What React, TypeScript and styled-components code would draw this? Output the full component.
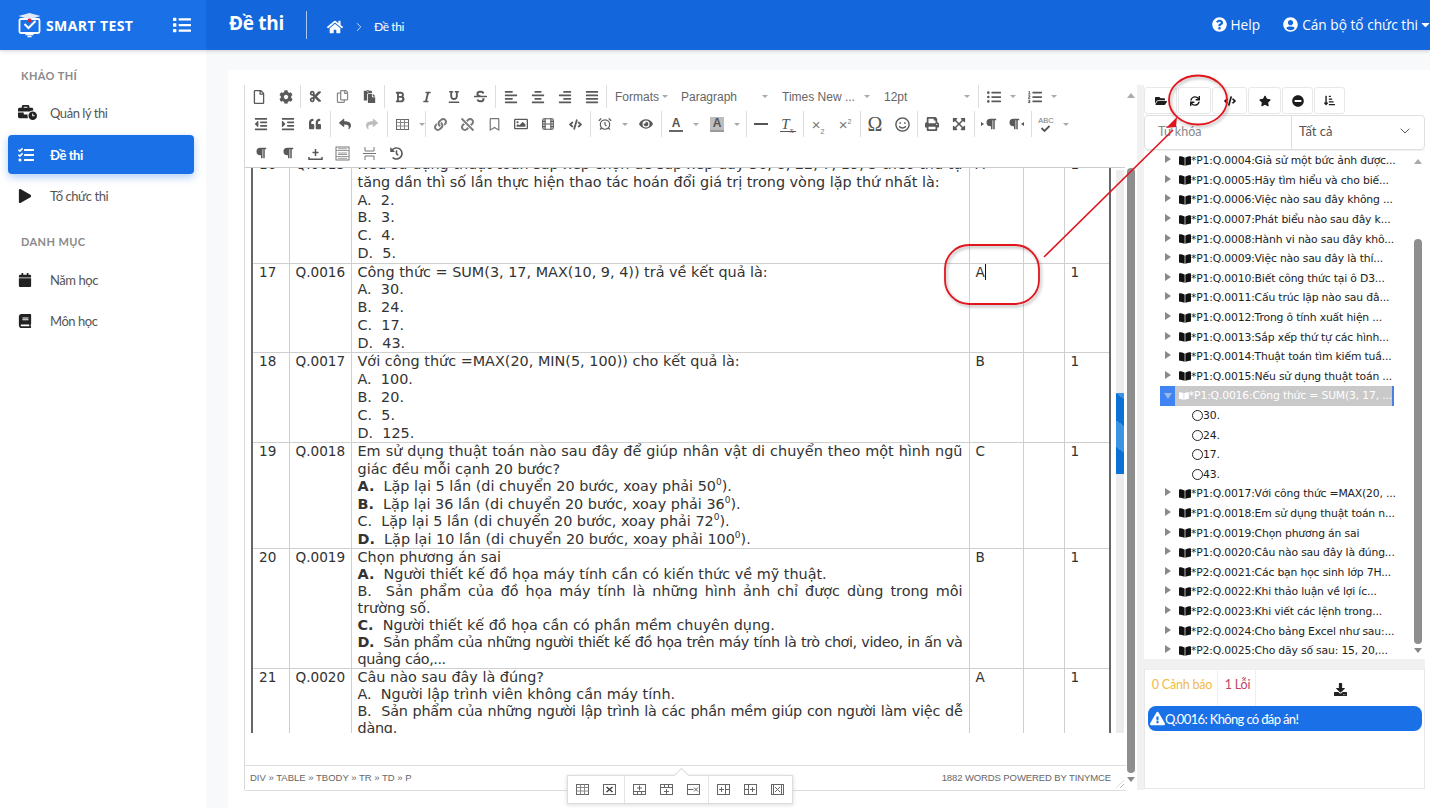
import type { FC, ReactNode } from 'react'
import {
  FaAlignCenter, FaAlignJustify, FaAlignLeft, FaAlignRight, FaBold, FaBook, FaBookOpen, FaBusinessTime,
  FaCalendar, FaCaretDown, FaCode, FaCog, FaCut, FaDownload, FaExclamationTriangle, FaExpandArrowsAlt, FaEye,
  FaFolderOpen, FaHistory, FaHome, FaIndent, FaItalic, FaLink, FaList, FaListOl, FaListUl, FaMinusCircle, FaOutdent,
  FaParagraph, FaPaste, FaPlay, FaPrint, FaQuestionCircle, FaQuoteLeft, FaRegBookmark, FaRegCopy, FaRegFile,
  FaRegImage, FaRegSmile, FaReply, FaShare, FaSortAmountDownAlt, FaStar, FaStrikethrough, FaSync, FaTasks,
  FaUnderline, FaUnlink, FaUserCircle
} from 'react-icons/fa'
import { AlarmClock, ChevronDown, ChevronRight, Film } from 'lucide-react'
import styled, { createGlobalStyle } from 'styled-components'

const GlobalStyle = createGlobalStyle`
  html, body { margin: 0; padding: 0; background: #f8f9fb; }
  * { box-sizing: border-box; }
`

const Page = styled.div`
  position: relative;
  width: 1430px;
  height: 808px;
  overflow: hidden;
  font-family: Lato, 'Liberation Sans', sans-serif;
  display: flex;
  flex-direction: column;
`

/* header */
const Header = styled.header`
  height: 50px;
  flex: none;
  display: flex;
  align-items: center;
  background: #1366db;
  color: #fff;
  box-shadow: 0 1px 4px rgba(0, 0, 0, 0.18);
  z-index: 2;
`
const Brand = styled.div`
  width: 206px;
  height: 100%;
  flex: none;
  display: flex;
  align-items: center;
  padding: 0 15px 0 17px;
  background: #1a70e6;
`
const BrandName = styled.span`
  margin-left: 4px;
  font-family: 'Open Sans', sans-serif;
  font-size: 14px;
  font-weight: 700;
  letter-spacing: 0.4px;
  flex: 1;
`
const PageTitle = styled.h1`
  margin: -5px 0 0 23px;
  font-size: 19px;
  font-weight: 700;
  font-family: 'Open Sans', sans-serif;
  letter-spacing: -0.3px;
`
const HeadSep = styled.div`
  width: 1px;
  height: 28px;
  background: #a9c8f3;
  margin: 0 20px 0 22px;
`
const Crumb = styled.div`
  display: flex;
  align-items: center;
  gap: 7px;
  font-size: 12px;
  margin-top: 3px;
  letter-spacing: -0.4px;
`
const HeadRight = styled.div`
  margin-left: auto;
  display: flex;
  align-items: center;
  font-family: 'Open Sans', sans-serif;
  font-size: 13.7px;
  margin-top: -2px;
  white-space: nowrap;
`
const HeadLink = styled.span<{ $gap: number }>`
  display: flex;
  align-items: center;
  gap: 4px;
  margin-right: ${(p) => p.$gap}px;
`

/* sidebar */
const Body = styled.div`
  flex: 1;
  display: flex;
  min-height: 0;
`
const Sidebar = styled.aside`
  width: 206px;
  flex: none;
  background: #fff;
  padding: 19px 12px 0 8px;
`
const NavTitle = styled.div<{ $top?: number; $bottom: number }>`
  font-size: 11px;
  font-weight: 700;
  color: #8a8a8a;
  letter-spacing: 0.4px;
  padding-left: 13px;
  height: 13px;
  line-height: 13px;
  margin: ${(p) => p.$top ?? 0}px 0 ${(p) => p.$bottom}px;
`
const NavItem = styled.div<{ $active?: boolean }>`
  height: ${(p) => (p.$active ? 39 : 41)}px;
  margin: ${(p) => (p.$active ? '2px 0 1px' : '0')};
  display: flex;
  align-items: center;
  padding-left: 10px;
  font-size: 13px;
  letter-spacing: -0.45px;
  border-radius: 4px;
  color: ${(p) => (p.$active ? '#fff' : '#555')};
  font-weight: ${(p) => (p.$active ? 700 : 400)};
  background: ${(p) => (p.$active ? '#1a70e6' : 'transparent')};
  box-shadow: ${(p) => (p.$active ? '0 3px 8px rgba(26, 112, 230, 0.35)' : 'none')};
`
const NavIcon = styled.span`
  width: 32px;
  display: flex;
  justify-content: flex-start;
  color: #222;
  ${NavItem}[data-active='true'] & { color: #fff; }
`

/* main card */
const Main = styled.main`
  flex: 1;
  padding: 20px 0 0 22px;
  background: #f8f9fb;
  min-width: 0;
`
const Card = styled.section`
  height: 100%;
  background: #fff;
  display: flex;
  padding: 15px 5px 18px 16px;
`
const EditorPane = styled.div`
  width: 881px;
  flex: none;
  display: flex;
  flex-direction: column;
  border-left: 1px solid #d8d8d8;
`
const ToolStack = styled.div`
  height: 83px;
  flex: none;
  border-bottom: 1px solid #ccc;
  color: #555;
`
const ToolRow = styled.div<{ $inset: number; $h: number; $after: number }>`
  display: flex;
  align-items: stretch;
  height: ${(p) => p.$h}px;
  margin-bottom: ${(p) => p.$after}px;
  padding-left: ${(p) => p.$inset}px;
`
const ToolGroup = styled.div`
  display: flex;
  align-items: center;
  & + & {
    border-left: 1px solid #dedede;
    margin-left: 1px;
    padding-left: 1px;
  }
`
const ToolBtn = styled.div<{ $w?: number; $muted?: boolean }>`
  width: ${(p) => p.$w ?? 27}px;
  height: 22px;
  flex: none;
  display: flex;
  align-items: center;
  color: ${(p) => (p.$muted ? '#bcbcbc' : '#595959')};
`
const IconBox = styled.span`
  width: 27px;
  flex: none;
  display: flex;
  justify-content: center;
  align-items: center;
`
const MiniCaret = styled.span`
  width: 0;
  height: 0;
  margin-left: 3px;
  border-left: 3px solid transparent;
  border-right: 3px solid transparent;
  border-top: 3px solid #aaa;
`
const ListBox = styled.div<{ $w: number }>`
  width: ${(p) => p.$w}px;
  display: flex;
  align-items: center;
  justify-content: space-between;
  padding: 0 7px;
  font-family: 'Liberation Sans', sans-serif;
  font-size: 12px;
  color: #666;
  white-space: nowrap;
`
const LetterA = styled.span<{ $bg?: boolean }>`
  font-family: 'Liberation Sans', sans-serif;
  font-size: 12px;
  font-weight: 700;
  line-height: 13px;
  padding: 0 3px;
  color: #555;
  background: ${(p) => (p.$bg ? '#bdbdbd' : 'transparent')};
  border-bottom: 2px solid ${(p) => (p.$bg ? '#9a9a9a' : '#666')};
`
const HrLine = styled.span`
  width: 14px;
  height: 2px;
  background: #555;
`
const Omega = styled.span`
  font-family: 'Liberation Serif', serif;
  font-size: 20px;
  line-height: 20px;
  color: #555;
`
const ClearFormat = styled.span`
  font-family: 'Liberation Serif', serif;
  font-style: italic;
  font-size: 15px;
  line-height: 14px;
  color: #555;
  border-bottom: 1.5px solid #555;
  padding: 0 2px 0 1px;
  sub {
    font-size: 8px;
    line-height: 0;
    font-style: normal;
  }
`
const ScriptX = styled.span`
  font-family: 'Liberation Sans', sans-serif;
  font-size: 15px;
  line-height: 15px;
  color: #777;
  sub, sup {
    font-size: 7px;
    line-height: 0;
  }
`
const DirMark = styled.span<{ $rtl?: boolean }>`
  display: flex;
  align-items: center;
  flex-direction: ${(p) => (p.$rtl ? 'row-reverse' : 'row')};
  gap: 1px;
  &::before {
    content: '';
    border-top: 2.5px solid transparent;
    border-bottom: 2.5px solid transparent;
    ${(p) => (p.$rtl ? 'border-right: 3px solid #555;' : 'border-left: 3px solid #555;')}
  }
`
const SpellMark = styled.span`
  display: flex;
  flex-direction: column;
  align-items: center;
  font-family: 'Liberation Sans', sans-serif;
  font-size: 7.5px;
  line-height: 8px;
  color: #777;
`
const ContentArea = styled.div`
  height: 597px;
  flex: none;
  display: flex;
  align-items: flex-start;
  padding-left: 6px;
`
const TableView = styled.div`
  width: 860px;
  height: 565px;
  flex: none;
  overflow: hidden;
`
const InnerTrack = styled.div`
  width: 8px;
  height: 563px;
  flex: none;
  margin: 2px 0 0 5px;
  background: #ececec;
  padding-top: 223px;
`
const InnerThumb = styled.div`
  height: 81px;
  background: repeating-linear-gradient(35deg, #0b72d4 0 22px, #3d94e2 22px 44px);
`
const Grid = styled.table`
  table-layout: fixed;
  width: 858px;
  margin-top: -13px;
  border-collapse: collapse;
  font-family: 'DejaVu Sans', Verdana, sans-serif;
  font-size: 14.4px;
  color: #333;
  border-left: 2px solid #666;
  border-right: 2px solid #666;
`
const Row = styled.tr<{ $lh: number }>`
  line-height: ${(p) => p.$lh}px;
`
const Cell = styled.td`
  border: 1px solid #cfcfcf;
  padding: 0 6px;
  vertical-align: top;
`
const Line = styled.div<{ $fill?: boolean; $tight?: number }>`
  text-align: ${(p) => (p.$fill ? 'justify' : 'left')};
  letter-spacing: ${(p) => p.$tight ?? 0}px;
  white-space: pre-wrap;
`
const Small = styled.span`
  font-size: 13.6px;
`
const Sup = styled.sup`
  font-size: 9px;
  line-height: 0;
`
const CaretMark = styled.span`
  border-right: 1px solid #111;
`
const StatusBar = styled.div`
  position: relative;
  height: 26px;
  flex: none;
  display: flex;
  justify-content: space-between;
  align-items: center;
  padding: 0 15px 2px 5px;
  border-top: 1px solid #ddd;
  border-bottom: 1px solid #ddd;
  margin-right: -1px;
  font-family: 'Liberation Sans', sans-serif;
  font-size: 9.5px;
  color: #666;
  &::after {
    content: '';
    position: absolute;
    right: 2px;
    bottom: 2px;
    width: 8px;
    height: 8px;
    background: repeating-linear-gradient(135deg, transparent 0 2px, #bbb 2px 3px);
    clip-path: polygon(100% 0, 100% 100%, 0 100%);
  }
`
const WordCount = styled.span`
  letter-spacing: -0.1px;
`
const EditorScroll = styled.div`
  width: 12px;
  flex: none;
  display: flex;
  flex-direction: column;
  align-items: center;
  padding-bottom: 3px;
`
const ScrollArrow = styled.span<{ $up?: boolean; $h: number }>`
  width: 0;
  height: 0;
  flex: none;
  border-left: 4px solid transparent;
  border-right: 4px solid transparent;
  border-bottom: ${(p) => (p.$up ? '5px solid #aaa' : '0')};
  border-top: ${(p) => (p.$up ? '0' : '5px solid #888')};
  margin: ${(p) => (p.$up ? `8px 0 ${p.$h}px` : `${p.$h}px 0 0`)};
`
const ScrollThumb = styled.div<{ $h: number; $w?: number }>`
  width: ${(p) => p.$w ?? 8}px;
  height: ${(p) => p.$h}px;
  flex: none;
  border-radius: 4px;
  background: #8e8e8e;
`
const Gutter = styled.div`
  width: 7px;
  flex: none;
  background: #f1f1f1;
`

/* right pane */
const RightPane = styled.div`
  width: 281px;
  flex: none;
  display: flex;
  flex-direction: column;
`
const ActionRow = styled.div`
  display: flex;
  gap: 1px;
  margin-top: 2px;
  height: 27px;
  flex: none;
`
const ActionBtn = styled.div<{ $w: number }>`
  width: ${(p) => p.$w}px;
  border: 1px solid #e8e8e8;
  border-radius: 3px;
  display: flex;
  align-items: center;
  justify-content: center;
  color: #1c1c1c;
`
const FilterRow = styled.div`
  height: 35px;
  flex: none;
  margin-top: 1px;
  display: flex;
  border: 1px solid #dfdfdf;
  border-radius: 4px;
  font-size: 12.5px;
`
const KeywordInput = styled.div`
  width: 147px;
  padding: 0 13px 3px;
  display: flex;
  align-items: center;
  color: #888;
  border-right: 1px solid #dfdfdf;
`
const ScopeSelect = styled.div`
  flex: 1;
  padding: 0 11px 3px 7px;
  display: flex;
  align-items: center;
  justify-content: space-between;
  color: #555;
  font-size: 13px;
`
const TreePane = styled.div`
  height: 509px;
  flex: none;
  display: flex;
  border-top: 1px solid #f1f1f1;
`
const TreeList = styled.div`
  width: 269px;
  flex: none;
  font-family: 'DejaVu Sans', Verdana, sans-serif;
  font-size: 10.8px;
  letter-spacing: -0.17px;
  color: #222;
  padding-left: 16px;
`
const TreeRow = styled.div<{ $selected?: boolean }>`
  height: 19.6px;
  display: flex;
  align-items: center;
  white-space: nowrap;
  width: ${(p) => (p.$selected ? '234px' : 'auto')};
  color: ${(p) => (p.$selected ? '#fff' : '#222')};
  background: ${(p) => (p.$selected ? '#c9c9c9' : 'transparent')};
  border-right: ${(p) => (p.$selected ? '2px solid #4a80e0' : '0')};
`
const Toggle = styled.span<{ $selected?: boolean }>`
  width: 15px;
  height: 100%;
  flex: none;
  display: flex;
  align-items: center;
  justify-content: center;
  background: ${(p) => (p.$selected ? '#3f84f2' : 'transparent')};
  margin-right: 4px;
  &::before {
    content: '';
    ${(p) =>
      p.$selected
        ? 'border-left: 4px solid transparent; border-right: 4px solid transparent; border-top: 6px solid #9db9e6;'
        : 'border-top: 4px solid transparent; border-bottom: 4px solid transparent; border-left: 6px solid #8a8a8a; margin-top: -3px;'}
  }
`
const Answer = styled.div`
  height: 19.6px;
  display: flex;
  align-items: center;
  padding-left: 32px;
`
const Radio = styled.span`
  width: 11px;
  height: 11px;
  border-radius: 50%;
  border: 1.3px solid #222;
`
const TreeScroll = styled.div`
  width: 12px;
  flex: none;
  margin-left: -1px;
  display: flex;
  flex-direction: column;
  align-items: center;
`
const Splitter = styled.div`
  height: 10px;
  flex: none;
  background: #f1f1f1;
  margin-left: -1px;
`
const IssuePanel = styled.div`
  height: 120px;
  flex: none;
  border: 1px solid #e8e8e8;
  border-top-color: #eee;
`
const IssueTabs = styled.div`
  height: 36px;
  display: flex;
  font-size: 12.5px;
  letter-spacing: -0.2px;
`
const IssueTab = styled.div<{ $color: string; $w: number }>`
  width: ${(p) => p.$w}px;
  display: flex;
  align-items: center;
  justify-content: center;
  padding: 0 0 7px 2px;
  color: ${(p) => p.$color};
  border-right: 1px solid #eee;
`
const IssueTools = styled.div`
  flex: 1;
  display: flex;
  justify-content: center;
  align-items: center;
  padding-top: 2px;
  color: #222;
`
const Alert = styled.div`
  margin: 0 2px 0 3px;
  height: 25px;
  display: flex;
  align-items: center;
  padding-left: 2px;
  gap: 0;
  border-radius: 8px;
  background: #1a70e6;
  color: #fff;
  font-size: 13px;
  letter-spacing: -0.65px;
`

/* overlays */
const Marks = styled.svg`
  position: absolute;
  inset: 0;
  pointer-events: none;
  z-index: 4;
`
const FloatBar = styled.div`
  position: absolute;
  left: 567px;
  top: 775px;
  height: 29px;
  display: flex;
  background: #fff;
  border: 1px solid #ddd;
  box-shadow: 0 1px 4px rgba(0, 0, 0, 0.15);
  z-index: 3;
  &::before {
    content: '';
    position: absolute;
    left: 108px;
    top: -6px;
    width: 10px;
    height: 10px;
    background: #fff;
    border-left: 1px solid #ddd;
    border-top: 1px solid #ddd;
    transform: rotate(45deg);
  }
`
const FloatGroup = styled.div`
  display: flex;
  align-items: center;
  padding: 0 1px;
  position: relative;
  & + & { border-left: 1px solid #e3e3e3; }
`
const FloatBtn = styled.span`
  width: 27px;
  display: flex;
  justify-content: center;
`

const Logo: FC = () => (
  <svg width="25" height="26" viewBox="0 0 24 26" fill="none">
    <rect x="2" y="7" width="20" height="14" rx="1.5" stroke="#fff" strokeWidth="1.8" />
    <path d="M8 22.5h8M10 24.5h4" stroke="#fff" strokeWidth="1.6" />
    <path d="M1 4l11-3 11 3-11 3.5z" fill="#dfe9fb" />
    <path d="M7 12l4 4 7-7" stroke="#fff" strokeWidth="2" />
    <circle cx="12" cy="8.5" r="2" fill="#d7263d" />
  </svg>
)

type TableMark = 'none' | 'x' | 'rowUp' | 'rowDown' | 'rowX' | 'colLeft' | 'colRight' | 'colX'

// small table glyph used by the table menu and floating toolbar
const TableGlyph: FC<{ mark?: TableMark; size?: number }> = ({ mark = 'none', size = 15 }) => (
  <svg width={size} height={size} viewBox="0 0 15 15" fill="none" stroke="#666" strokeWidth="1">
    <rect x="1.5" y="2.5" width="12" height="10" />
    {mark === 'none' && <path d="M1.5 5.5h12M1.5 9h12M5.5 2.5v10M9.5 2.5v10" stroke="#888" />}
    {mark === 'x' && <path d="M4.5 5l6 5M10.5 5l-6 5" strokeWidth="1.6" stroke="#444" />}
    {mark === 'rowUp' && <path d="M1.5 9.5h12M5.5 9.5v3M9.5 9.5v3M7.5 3.5v5M5 6h5" />}
    {mark === 'rowDown' && <path d="M1.5 5.5h12M5.5 2.5v3M9.5 2.5v3M7.5 7v5M5 9.5h5" />}
    {mark === 'rowX' && <path d="M1.5 7.5h6M8 5.5l4 4M12 5.5l-4 4" />}
    {mark === 'colLeft' && <path d="M9.5 2.5v10M3 7.5h5M5.5 5v5M9.5 7.5h4" />}
    {mark === 'colRight' && <path d="M5.5 2.5v10M7 7.5h5M9.5 5v5M1.5 7.5h4" />}
    {mark === 'colX' && <path d="M5 5l5 5M10 5l-5 5M3.5 2.5v10M11.5 2.5v10" />}
  </svg>
)

const UploadGlyph: FC = () => (
  <svg width="15" height="15" viewBox="0 0 15 15" fill="none" stroke="#555" strokeWidth="1.5">
    <path d="M1 11v2.2h13V11M7.5 3v7M4.5 6.5h6" />
  </svg>
)
const TemplateGlyph: FC = () => (
  <svg width="15" height="15" viewBox="0 0 15 15" fill="none" stroke="#777" strokeWidth="1">
    <rect x="1" y="1" width="13" height="13" />
    <path d="M1 4.5h13M1 10.5h13M3 7h9M3 8.5h9M3 12.3h9M3 2.8h9" stroke="#999" />
  </svg>
)
const BreakGlyph: FC = () => (
  <svg width="15" height="15" viewBox="0 0 15 15" fill="none" stroke="#777" strokeWidth="1">
    <path d="M3 1v4h9V1M3 14v-4h9v4M1 7.5h13" />
  </svg>
)
const CheckGlyph: FC = () => (
  <svg width="11" height="7" viewBox="0 0 11 7" fill="none" stroke="#555" strokeWidth="1.8">
    <path d="M1.5 3l3 3 5-5" />
  </svg>
)

const Tool: FC<{ children: ReactNode; w?: number; caret?: boolean; muted?: boolean }> = ({ children, w, caret, muted }) => (
  <ToolBtn $w={w} $muted={muted}>
    <IconBox>{children}</IconBox>
    {caret && <MiniCaret />}
  </ToolBtn>
)

const Select: FC<{ label: string; w: number }> = ({ label, w }) => (
  <ListBox $w={w}>
    {label}
    <MiniCaret />
  </ListBox>
)

const treeTop = [
  'P1:Q.0004:Giả sử một bức ảnh được...',
  'P1:Q.0005:Hãy tìm hiểu và cho biế...',
  'P1:Q.0006:Việc nào sau đây không ...',
  'P1:Q.0007:Phát biểu nào sau đây k...',
  'P1:Q.0008:Hành vi nào sau đây khô...',
  'P1:Q.0009:Việc nào sau đây là thí...',
  'P1:Q.0010:Biết công thức tại ô D3...',
  'P1:Q.0011:Cấu trúc lặp nào sau đâ...',
  'P1:Q.0012:Trong ô tính xuất hiện ...',
  'P1:Q.0013:Sắp xếp thứ tự các hình...',
  'P1:Q.0014:Thuật toán tìm kiếm tuầ...',
  'P1:Q.0015:Nếu sử dụng thuật toán ...'
]
const treeBottom = [
  'P1:Q.0017:Với công thức =MAX(20, ...',
  'P1:Q.0018:Em sử dụng thuật toán n...',
  'P1:Q.0019:Chọn phương án sai',
  'P1:Q.0020:Câu nào sau đây là đúng...',
  'P2:Q.0021:Các bạn học sinh lớp 7H...',
  'P2:Q.0022:Khi thảo luận về lợi íc...',
  'P2:Q.0023:Khi viết các lệnh trong...',
  'P2:Q.0024:Cho bảng Excel như sau:...',
  'P2:Q.0025:Cho dãy số sau: 15, 20,...'
]

const TreeItem: FC<{ text: string; selected?: boolean }> = ({ text, selected }) => (
  <TreeRow $selected={selected}>
    <Toggle $selected={selected} />
    <FaBookOpen size={12} color={selected ? '#fff' : '#111'} />*{text}
  </TreeRow>
)

const QuestionRow: FC<{ no: number; code: string; answer: ReactNode; lh: number; children: ReactNode }> = ({
  no,
  code,
  answer,
  lh,
  children
}) => (
  <Row $lh={lh}>
    <Cell>
      <Small>{no}</Small>
    </Cell>
    <Cell>
      <Small>{code}</Small>
    </Cell>
    <Cell>{children}</Cell>
    <Cell>
      <Small>{answer}</Small>
    </Cell>
    <Cell />
    <Cell>
      <Small>1</Small>
    </Cell>
  </Row>
)

const App: FC = () => (
  <Page>
    <GlobalStyle />
    <Header>
      <Brand>
        <Logo />
        <BrandName>SMART TEST</BrandName>
        <FaList size={18} />
      </Brand>
      <PageTitle>Đề thi</PageTitle>
      <HeadSep />
      <Crumb>
        <FaHome size={16} />
        <ChevronRight size={14} strokeWidth={1.3} style={{ margin: '0 1px 0 2px' }} />
        Đề thi
      </Crumb>
      <HeadRight>
        <HeadLink $gap={23}>
          <FaQuestionCircle size={15} />
          Help
        </HeadLink>
        <HeadLink $gap={-2}>
          <FaUserCircle size={15} />
          Cán bộ tổ chức thi
          <FaCaretDown size={13} style={{ marginLeft: -3 }} />
        </HeadLink>
      </HeadRight>
    </Header>

    <Body>
      <Sidebar>
        <NavTitle $bottom={10}>KHẢO THÍ</NavTitle>
        <NavItem>
          <NavIcon>
            <FaBusinessTime size={19} />
          </NavIcon>
          Quản lý thi
        </NavItem>
        <NavItem $active data-active="true">
          <NavIcon>
            <FaTasks size={16} />
          </NavIcon>
          Đề thi
        </NavItem>
        <NavItem>
          <NavIcon>
            <FaPlay size={14} />
          </NavIcon>
          Tổ chức thi
        </NavItem>
        <NavTitle $top={19} $bottom={11}>DANH MỤC</NavTitle>
        <NavItem>
          <NavIcon>
            <FaCalendar size={14} />
          </NavIcon>
          Năm học
        </NavItem>
        <NavItem>
          <NavIcon>
            <FaBook size={14} />
          </NavIcon>
          Môn học
        </NavItem>
      </Sidebar>

      <Main>
        <Card>
          <EditorPane>
            <ToolStack>
              <ToolRow $inset={0} $h={23} $after={3}>
                <ToolGroup>
                  <Tool><FaRegFile size={14} /></Tool>
                  <Tool><FaCog size={14} /></Tool>
                </ToolGroup>
                <ToolGroup>
                  <Tool><FaCut size={13} /></Tool>
                  <Tool><FaRegCopy size={13} color="#888" /></Tool>
                  <Tool><FaPaste size={13} /></Tool>
                </ToolGroup>
                <ToolGroup>
                  <Tool><FaBold size={12} /></Tool>
                  <Tool><FaItalic size={12} /></Tool>
                  <Tool><FaUnderline size={12} /></Tool>
                  <Tool><FaStrikethrough size={13} /></Tool>
                </ToolGroup>
                <ToolGroup>
                  <Tool><FaAlignLeft size={14} /></Tool>
                  <Tool><FaAlignCenter size={14} /></Tool>
                  <Tool><FaAlignRight size={14} /></Tool>
                  <Tool><FaAlignJustify size={14} /></Tool>
                </ToolGroup>
                <ToolGroup>
                  <Select label="Formats" w={66} />
                  <Select label="Paragraph" w={101} />
                  <Select label="Times New ..." w={102} />
                  <Select label="12pt" w={100} />
                </ToolGroup>
                <ToolGroup>
                  <Tool w={41} caret><FaListUl size={14} /></Tool>
                  <Tool w={37} caret><FaListOl size={14} /></Tool>
                </ToolGroup>
              </ToolRow>
              <ToolRow $inset={2.5} $h={26} $after={3}>
                <ToolGroup>
                  <Tool><FaOutdent size={14} /></Tool>
                  <Tool><FaIndent size={14} /></Tool>
                  <Tool><FaQuoteLeft size={12} /></Tool>
                </ToolGroup>
                <ToolGroup>
                  <Tool><FaReply size={12} /></Tool>
                  <Tool muted><FaShare size={12} /></Tool>
                </ToolGroup>
                <ToolGroup>
                  <Tool w={35} caret><TableGlyph /></Tool>
                </ToolGroup>
                <ToolGroup>
                  <Tool><FaLink size={13} color="#777" /></Tool>
                  <Tool><FaUnlink size={13} color="#777" /></Tool>
                  <Tool><FaRegBookmark size={13} color="#777" /></Tool>
                  <Tool><FaRegImage size={14} /></Tool>
                  <Tool><Film size={14} /></Tool>
                  <Tool><FaCode size={13} /></Tool>
                </ToolGroup>
                <ToolGroup>
                  <Tool w={41} caret><AlarmClock size={14} /></Tool>
                  <Tool><FaEye size={14} /></Tool>
                </ToolGroup>
                <ToolGroup>
                  <Tool w={41} caret><LetterA>A</LetterA></Tool>
                  <Tool w={41} caret><LetterA $bg>A</LetterA></Tool>
                </ToolGroup>
                <ToolGroup>
                  <Tool><HrLine /></Tool>
                  <Tool><ClearFormat>T<sub>x</sub></ClearFormat></Tool>
                </ToolGroup>
                <ToolGroup>
                  <Tool><ScriptX>×<sub>2</sub></ScriptX></Tool>
                  <Tool><ScriptX>×<sup>2</sup></ScriptX></Tool>
                </ToolGroup>
                <ToolGroup>
                  <Tool><Omega>Ω</Omega></Tool>
                  <Tool><FaRegSmile size={15} /></Tool>
                </ToolGroup>
                <ToolGroup>
                  <Tool><FaPrint size={14} /></Tool>
                  <Tool><FaExpandArrowsAlt size={14} /></Tool>
                </ToolGroup>
                <ToolGroup>
                  <Tool><DirMark><FaParagraph size={12} /></DirMark></Tool>
                  <Tool><DirMark $rtl><FaParagraph size={12} /></DirMark></Tool>
                </ToolGroup>
                <ToolGroup>
                  <Tool w={41} caret><SpellMark>ABC<CheckGlyph /></SpellMark></Tool>
                </ToolGroup>
              </ToolRow>
              <ToolRow $inset={2.5} $h={26} $after={0}>
                <ToolGroup>
                  <Tool><FaParagraph size={12} /></Tool>
                  <Tool><FaParagraph size={12} /></Tool>
                  <Tool><UploadGlyph /></Tool>
                  <Tool><TemplateGlyph /></Tool>
                  <Tool><BreakGlyph /></Tool>
                  <Tool><FaHistory size={13} /></Tool>
                </ToolGroup>
              </ToolRow>
            </ToolStack>

            <ContentArea>
              <TableView>
                <Grid>
                  <colgroup>
                    <col width={37} />
                    <col width={62} />
                    <col width={618} />
                    <col width={54} />
                    <col width={41} />
                    <col width={46} />
                  </colgroup>
                  <tbody>
                    <QuestionRow no={16} code="Q.0015" answer="A" lh={17.75}>
                      <Line $fill>
                        Nếu sử dụng thuật toán sắp xếp chọn để sắp xếp dãy 36, 8, 22, 7, 19, 5 theo thứ tự tăng dần thì số lần thực hiện thao tác hoán đổi giá trị trong vòng lặp thứ nhất là:
                      </Line>
                      <Line>A.  2.</Line>
                      <Line>B.  3.</Line>
                      <Line>C.  4.</Line>
                      <Line>D.  5.</Line>
                    </QuestionRow>
                    <QuestionRow no={17} code="Q.0016" answer={<CaretMark>A</CaretMark>} lh={17.8}>
                      <Line>Công thức = SUM(3, 17, MAX(10, 9, 4)) trả về kết quả là:</Line>
                      <Line>A.  30.</Line>
                      <Line>B.  24.</Line>
                      <Line>C.  17.</Line>
                      <Line>D.  43.</Line>
                    </QuestionRow>
                    <QuestionRow no={18} code="Q.0017" answer="B" lh={17.8}>
                      <Line>Với công thức =MAX(20, MIN(5, 100)) cho kết quả là:</Line>
                      <Line>A.  100.</Line>
                      <Line>B.  20.</Line>
                      <Line>C.  5.</Line>
                      <Line>D.  125.</Line>
                    </QuestionRow>
                    <QuestionRow no={19} code="Q.0018" answer="C" lh={17.5}>
                      <Line $fill>Em sử dụng thuật toán nào sau đây để giúp nhân vật di chuyển theo một hình ngũ giác đều mỗi cạnh 20 bước?</Line>
                      <Line><b>A.</b>  Lặp lại 5 lần (di chuyển 20 bước, xoay phải 50<Sup>0</Sup>).</Line>
                      <Line><b>B.</b>  Lặp lại 36 lần (di chuyển 20 bước, xoay phải 36<Sup>0</Sup>).</Line>
                      <Line>C.  Lặp lại 5 lần (di chuyển 20 bước, xoay phải 72<Sup>0</Sup>).</Line>
                      <Line><b>D.</b>  Lặp lại 10 lần (di chuyển 20 bước, xoay phải 100<Sup>0</Sup>).</Line>
                    </QuestionRow>
                    <QuestionRow no={20} code="Q.0019" answer="B" lh={17}>
                      <Line>Chọn phương án sai</Line>
                      <Line><b>A.</b>  Người thiết kế đồ họa máy tính cần có kiến thức về mỹ thuật.</Line>
                      <Line $fill>B.  Sản phẩm của đồ họa máy tính là những hình ảnh chỉ được dùng trong môi trường số.</Line>
                      <Line><b>C.</b>  Người thiết kế đồ họa cần có phần mềm chuyên dụng.</Line>
                      <Line $fill $tight={-0.42}><b>D.</b>  Sản phẩm của những người thiết kế đồ họa trên máy tính là trò chơi, video, in ấn và quảng cáo,...</Line>
                    </QuestionRow>
                    <QuestionRow no={21} code="Q.0020" answer="A" lh={17}>
                      <Line>Câu nào sau đây là đúng?</Line>
                      <Line>A.  Người lập trình viên không cần máy tính.</Line>
                      <Line $fill $tight={-0.25}>B.  Sản phẩm của những người lập trình là các phần mềm giúp con người làm việc dễ dàng.</Line>
                    </QuestionRow>
                  </tbody>
                </Grid>
              </TableView>
              <InnerTrack>
                <InnerThumb />
              </InnerTrack>
            </ContentArea>
            <StatusBar>
              <span>DIV » TABLE » TBODY » TR » TD » P</span>
              <WordCount>1882 WORDS POWERED BY TINYMCE</WordCount>
            </StatusBar>
          </EditorPane>

          <EditorScroll>
            <ScrollArrow $up $h={70} />
            <ScrollThumb $h={605} />
            <ScrollArrow $h={4} />
          </EditorScroll>
          <Gutter />

          <RightPane>
            <ActionRow>
              <ActionBtn $w={33}><FaFolderOpen size={12} /></ActionBtn>
              <ActionBtn $w={33}><FaSync size={10} /></ActionBtn>
              <ActionBtn $w={35}><FaCode size={12} /></ActionBtn>
              <ActionBtn $w={33}><FaStar size={12} /></ActionBtn>
              <ActionBtn $w={31}><FaMinusCircle size={12} /></ActionBtn>
              <ActionBtn $w={31}><FaSortAmountDownAlt size={11} /></ActionBtn>
            </ActionRow>
            <FilterRow>
              <KeywordInput>Từ khóa</KeywordInput>
              <ScopeSelect>
                Tất cả
                <ChevronDown size={16} strokeWidth={1.5} />
              </ScopeSelect>
            </FilterRow>
            <TreePane>
              <TreeList>
                {treeTop.map((text) => (
                  <TreeItem key={text} text={text} />
                ))}
                <TreeItem text="P1:Q.0016:Công thức = SUM(3, 17, ..." selected />
                {['30.', '24.', '17.', '43.'].map((text) => (
                  <Answer key={text}>
                    <Radio />
                    {text}
                  </Answer>
                ))}
                {treeBottom.map((text) => (
                  <TreeItem key={text} text={text} />
                ))}
              </TreeList>
              <TreeScroll>
                <ScrollArrow $up $h={75} />
                <ScrollThumb $h={405} />
                <ScrollArrow $h={4} />
              </TreeScroll>
            </TreePane>
            <Splitter />
            <IssuePanel>
              <IssueTabs>
                <IssueTab $color="#f0bb45" $w={73}>0 Cảnh báo</IssueTab>
                <IssueTab $color="#c4455e" $w={38}>1 Lỗi</IssueTab>
                <IssueTools>
                  <FaDownload size={13} />
                </IssueTools>
              </IssueTabs>
              <Alert>
                <FaExclamationTriangle size={15} />
                Q.0016: Không có đáp án!
              </Alert>
            </IssuePanel>
          </RightPane>
        </Card>
      </Main>
    </Body>

    <FloatBar>
      <FloatGroup>
        <FloatBtn><TableGlyph /></FloatBtn>
        <FloatBtn><TableGlyph mark="x" /></FloatBtn>
      </FloatGroup>
      <FloatGroup>
        <FloatBtn><TableGlyph mark="rowUp" /></FloatBtn>
        <FloatBtn><TableGlyph mark="rowDown" /></FloatBtn>
        <FloatBtn><TableGlyph mark="rowX" /></FloatBtn>
      </FloatGroup>
      <FloatGroup>
        <FloatBtn><TableGlyph mark="colLeft" /></FloatBtn>
        <FloatBtn><TableGlyph mark="colRight" /></FloatBtn>
        <FloatBtn><TableGlyph mark="colX" /></FloatBtn>
      </FloatGroup>
    </FloatBar>

    <Marks width="1430" height="808" viewBox="0 0 1430 808" fill="none">
      <defs>
        <filter id="soft" x="-20%" y="-20%" width="140%" height="140%">
          <feDropShadow dx="1.5" dy="2" stdDeviation="1.5" floodColor="#000" floodOpacity="0.3" />
        </filter>
      </defs>
      <rect x="945" y="245" width="94" height="59" rx="24" stroke="#e0141e" strokeWidth="1.8" filter="url(#soft)" />
      <ellipse cx="1198" cy="100" rx="29" ry="24.5" stroke="#e0141e" strokeWidth="1.8" filter="url(#soft)" />
      <path d="M1044 257L1173 130" stroke="#e0141e" strokeWidth="1.6" />
      <path d="M1177 117L1176 127 1166 128z" fill="#e0141e" />
    </Marks>
  </Page>
)

export default App
